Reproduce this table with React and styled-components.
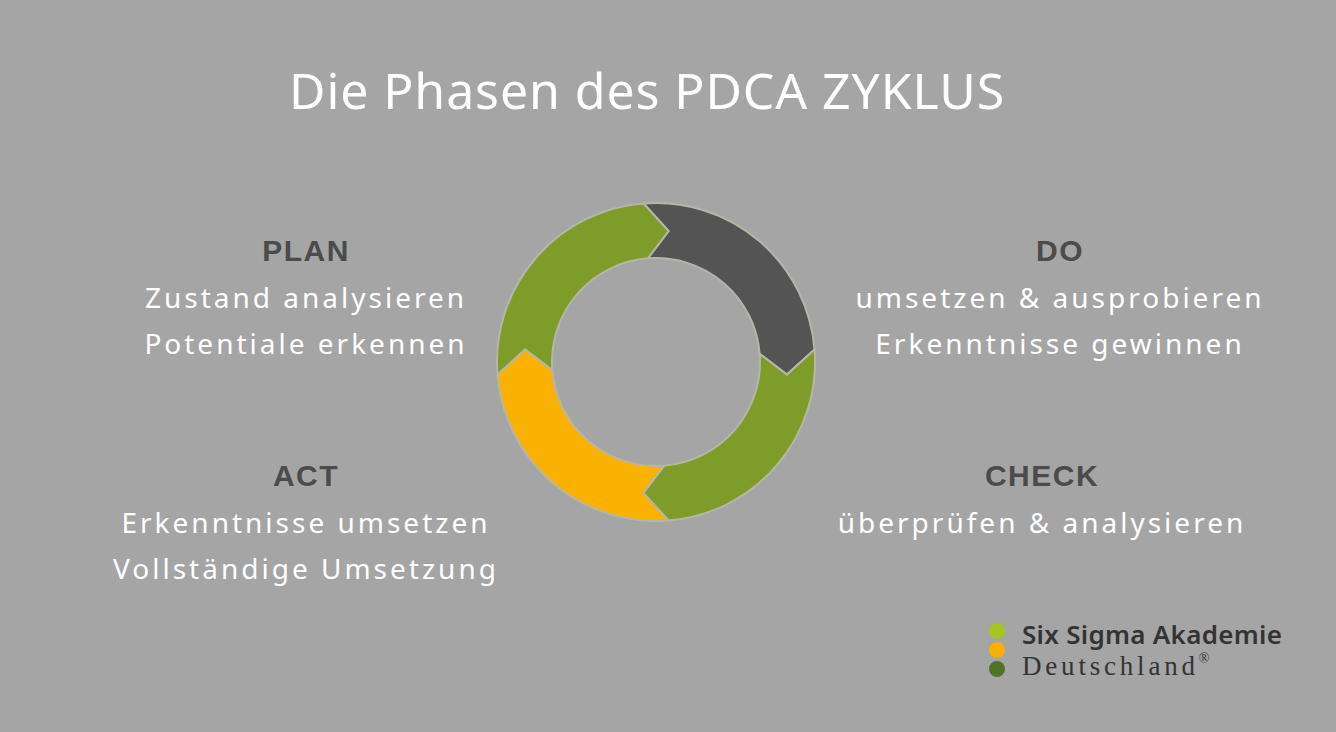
import React from "react";
import styled, { createGlobalStyle } from "styled-components";

const GlobalStyle = createGlobalStyle`
  html, body {
    margin: 0;
    padding: 0;
    background: #a5a5a5;
  }
  body {
    font-family: "Noto Sans", "Open Sans", sans-serif;
  }
`;

// ring geometry, angles in degrees clockwise from 12 o'clock
const CX = 160;
const CY = 160;
const R_OUT = 159;
const R_IN = 104;
const R_MID = (R_OUT + R_IN) / 2;
const TIP = 10;

const pt = (r, deg) => {
  const a = (deg * Math.PI) / 180;
  return `${(CX + r * Math.sin(a)).toFixed(2)} ${(CY - r * Math.cos(a)).toFixed(2)}`;
};

const arrowPath = (a, b) =>
  [
    `M ${pt(R_OUT, a)}`,
    `A ${R_OUT} ${R_OUT} 0 0 1 ${pt(R_OUT, b)}`,
    `L ${pt(R_MID, b + TIP)}`,
    `L ${pt(R_IN, b)}`,
    `A ${R_IN} ${R_IN} 0 0 0 ${pt(R_IN, a)}`,
    `L ${pt(R_MID, a + TIP)}`,
    "Z",
  ].join(" ");

const segments = [
  { key: "do", from: -4.5, to: 85.5, color: "#545454" },
  { key: "check", from: 85.5, to: 175.5, color: "#7d9c2a" },
  { key: "act", from: 175.5, to: 265.5, color: "#f9b200" },
  { key: "plan", from: 265.5, to: 355.5, color: "#7d9c2a" },
];

const phasesLeft = [
  { title: "PLAN", lines: ["Zustand analysieren", "Potentiale erkennen"] },
  { title: "ACT", lines: ["Erkenntnisse umsetzen", "Vollständige Umsetzung"] },
];

const phasesRight = [
  { title: "DO", lines: ["umsetzen & ausprobieren", "Erkenntnisse gewinnen"], shift: 0 },
  { title: "CHECK", lines: ["überprüfen & analysieren"], shift: 36 },
];

const Cycle = () => (
  <RingWrap>
    <svg width="320" height="320" viewBox="0 0 320 320">
      {segments.map(s => (
        <path
          key={s.key}
          d={arrowPath(s.from, s.to)}
          fill={s.color}
          stroke="#b6b6a8"
          strokeWidth="2"
          strokeLinejoin="miter"
        />
      ))}
    </svg>
  </RingWrap>
);

const PhaseBlock = ({ title, lines, shift = 0 }) => (
  <Block $shift={shift}>
    <Heading>{title}</Heading>
    {lines.map(line => (
      <Line key={line}>{line}</Line>
    ))}
  </Block>
);

const App = () => (
  <>
    <GlobalStyle />
    <Page>
      <Title>Die Phasen des PDCA ZYKLUS</Title>
      <Stage>
        <Column>
          {phasesLeft.map(p => (
            <PhaseBlock key={p.title} {...p} />
          ))}
        </Column>
        <Cycle />
        <Column $right>
          {phasesRight.map(p => (
            <PhaseBlock key={p.title} {...p} />
          ))}
        </Column>
      </Stage>
      <Footer>
        <Dots>
          <Dot $color="#a6c51f" />
          <Dot $color="#f9b000" />
          <Dot $color="#4f7329" />
        </Dots>
        <Brand>
          <BrandName>Six Sigma Akademie</BrandName>
          <BrandCountry>
            Deutschland<sup>®</sup>
          </BrandCountry>
        </Brand>
      </Footer>
    </Page>
  </>
);

const Page = styled.div`
  width: 1336px;
  height: 732px;
  overflow: hidden;
  display: flex;
  flex-direction: column;
  background: #a5a5a5;
`;

const Title = styled.h1`
  margin: 60px 0 0;
  padding-right: 42px;
  text-align: center;
  font-family: "Noto Sans", sans-serif;
  font-weight: 400;
  font-size: 50px;
  line-height: 60px;
  letter-spacing: 0.9px;
  color: #ffffff;
`;

const Stage = styled.div`
  display: grid;
  grid-template-columns: 412px 320px 1fr;
  margin-top: 82px;
  padding-left: 100px;
  height: 320px;
`;

const Column = styled.div`
  display: flex;
  flex-direction: column;
  gap: 87px;
  padding-top: 26px;
  padding-right: ${p => (p.$right ? "48px" : "0")};
`;

const Block = styled.div`
  display: flex;
  flex-direction: column;
  align-items: center;
  padding-right: ${p => p.$shift}px;
`;

const Heading = styled.div`
  font-family: "Liberation Sans", Arial, sans-serif;
  font-weight: 700;
  font-size: 30px;
  line-height: 46px;
  letter-spacing: 1.5px;
  color: #4b4b4b;
`;

const Line = styled.div`
  font-family: "Noto Sans", sans-serif;
  font-size: 28px;
  line-height: 46px;
  letter-spacing: 3px;
  color: #ffffff;
  white-space: nowrap;
`;

const RingWrap = styled.div`
  width: 320px;
  height: 320px;
  margin-left: -16px;

  svg {
    display: block;
  }
`;

const Footer = styled.div`
  display: flex;
  align-items: center;
  gap: 17px;
  margin-top: 96px;
  padding-left: 989px;
`;

const Dots = styled.div`
  display: flex;
  flex-direction: column;
  gap: 3px;
`;

const Dot = styled.span`
  width: 16px;
  height: 16px;
  border-radius: 50%;
  background: ${p => p.$color};
`;

const Brand = styled.div`
  display: flex;
  flex-direction: column;
  color: #333333;
`;

const BrandName = styled.div`
  font-family: "Noto Sans", sans-serif;
  font-weight: 600;
  font-size: 26px;
  line-height: 32px;
  letter-spacing: 0.3px;
`;

const BrandCountry = styled.div`
  font-family: "Liberation Serif", serif;
  font-size: 27px;
  line-height: 32px;
  letter-spacing: 3.8px;

  sup {
    font-size: 14px;
    vertical-align: 12px;
    line-height: 0;
    letter-spacing: 0;
  }
`;

export default App;
